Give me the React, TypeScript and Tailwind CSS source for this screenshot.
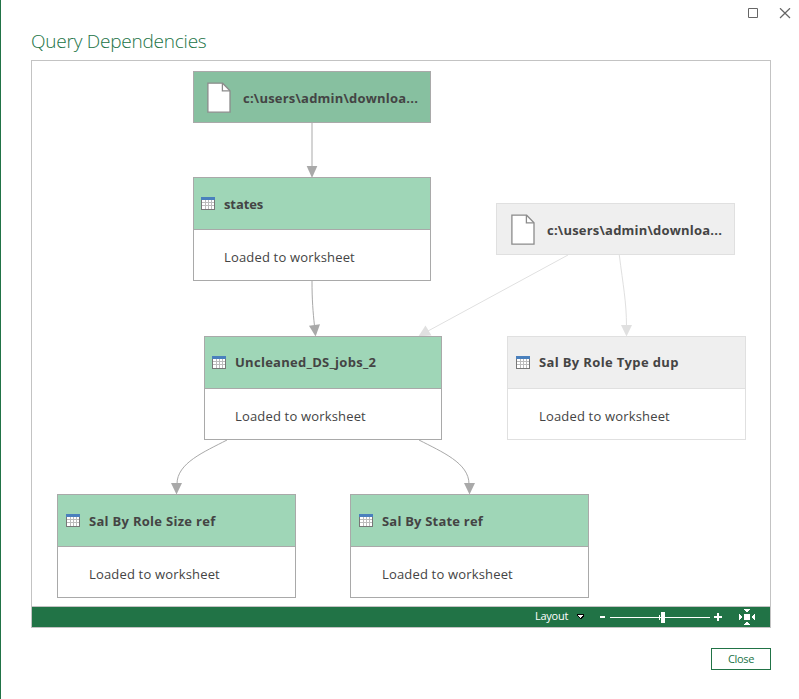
import React from "react";

type NodeData = {
  kind: "file" | "query";
  label: string;
  active: boolean;
  place: string;
  inset: string;
  text: string;
};

const nodes: NodeData[] = [
  { kind: "file", label: "c:\\users\\admin\\downloa...", active: true, place: "left-[161px] top-[10px] w-[238px]", inset: "pl-[13px]", text: "tracking-[0.21px]" },
  { kind: "query", label: "states", active: true, place: "left-[161px] top-[116px] w-[238px]", inset: "pl-[7px]", text: "tracking-[-0.1px]" },
  { kind: "file", label: "c:\\users\\admin\\downloa...", active: false, place: "left-[464px] top-[142px] w-[239px]", inset: "pl-[14px]", text: "tracking-[0.21px]" },
  { kind: "query", label: "Uncleaned_DS_jobs_2", active: true, place: "left-[172px] top-[275px] w-[238px]", inset: "pl-[7px]", text: "tracking-[0.28px] pb-[2px]" },
  { kind: "query", label: "Sal By Role Type dup", active: false, place: "left-[475px] top-[275px] w-[239px]", inset: "pl-[8px]", text: "tracking-[0.35px] pb-[2px]" },
  { kind: "query", label: "Sal By Role Size ref", active: true, place: "left-[25px] top-[433px] w-[239px]", inset: "pl-[8px]", text: "tracking-[0.29px]" },
  { kind: "query", label: "Sal By State ref", active: true, place: "left-[318px] top-[433px] w-[239px]", inset: "pl-[8px]", text: "tracking-[0.2px]" },
];

function FileIcon() {
  return (
    <svg className="h-8 w-6 shrink-0" viewBox="0 0 24 32">
      <path d="M.9 1.2H15.6L23 8.8V30.2H.9Z" fill="#fff" stroke="#8b8b8b" strokeWidth="1.3" />
      <path d="M15.4 1.2V8.8H23" fill="none" stroke="#8b8b8b" strokeWidth="1.3" />
    </svg>
  );
}

function TableIcon() {
  return (
    <svg className="h-[13px] w-[14px] shrink-0" viewBox="0 0 14 13" shapeRendering="crispEdges">
      <rect width="14" height="13" fill="#777" />
      <rect width="14" height="3" fill="#4a80bd" />
      <rect x="1" y="3" width="12" height="9" fill="#fff" />
      <path d="M4.5 3V12M7.5 3V12M10.5 3V12M1 5.5H13M1 8.5H13" stroke="#bcbcbc" />
    </svg>
  );
}

function GraphNode({ node }: { node: NodeData }) {
  const border = node.active ? "border-[#a9a9a9]" : "border-[#e0e0e0]";
  if (node.kind === "file") {
    return (
      <div className={`absolute flex h-[52px] items-center border pt-[2px] ${border} ${node.active ? "bg-[#87c0a0]" : "bg-[#efefef]"} ${node.inset} ${node.place}`}>
        <FileIcon />
        <span className={`ml-3 whitespace-nowrap text-[13px] font-bold leading-5 ${node.text}`}>{node.label}</span>
      </div>
    );
  }
  return (
    <div className={`absolute flex h-[104px] flex-col border bg-white ${border} ${node.place}`}>
      <div className={`flex h-[52px] items-center border-b ${border} ${node.active ? "bg-[#9fd6b7]" : "bg-[#efefef]"} ${node.inset}`}>
        <TableIcon />
        <span className={`ml-[9px] whitespace-nowrap text-[13px] font-bold leading-5 ${node.text}`}>{node.label}</span>
      </div>
      <div className={`flex flex-1 items-center pt-[3px] text-[13px] leading-5 tracking-[0.17px] ${node.inset}`}>
        <span className="ml-[23px]">Loaded to worksheet</span>
      </div>
    </div>
  );
}

function Edges() {
  return (
    <svg className="absolute inset-0 h-[545px] w-[738px]" viewBox="32 61 738 545" fill="none">
      <g stroke="#a9a9a9">
        <path d="M312 123V168" />
        <path d="M312 281C312 300 313 312 314.5 326" />
        <path d="M227 440C204 452 177 463 177 484" />
        <path d="M419 440C442 452 469 463 469 484" />
      </g>
      <g fill="#a9a9a9">
        <path d="M306.7 166H317.3L312 178Z" />
        <path d="M309 325.7L320 324.3L315.6 336.5Z" />
        <path d="M171 483H182L176.5 494.5Z" />
        <path d="M464 483H475L469.5 494.5Z" />
      </g>
      <g stroke="#e0e0e0">
        <path d="M568 255L428 331" />
        <path d="M619.3 255C623 285 626.5 302 626.5 326" />
      </g>
      <g fill="#e0e0e0">
        <path d="M425.5 325.5L431.5 335.5L418.5 336.2Z" />
        <path d="M621 325H632L626.5 336.5Z" />
      </g>
    </svg>
  );
}

function Toolbar() {
  return (
    <div className="flex h-[21px] items-center border-t border-[#c3c3c3] bg-[#217346] pl-[503px] text-white">
      <span className="w-[33px] whitespace-nowrap pb-[2px] text-[11px] leading-4 tracking-[-0.25px]">Layout</span>
      <svg className="h-5 w-[202px]" viewBox="568 607 202 20" shapeRendering="crispEdges">
        <path d="M577 614H584V616L580.5 619.5L577 616Z" fill="#000" />
        <path d="M578 615H583V616H582V617H581V618H580V617H579V616H578Z" fill="#fff" />
        <g fill="#fff">
          <path d="M600 616H605V618H600Z" />
          <path d="M610 617H710V618H610Z" />
          <path d="M659 615H660V620H659Z" />
          <path d="M661 612H665V623H661Z" />
          <path d="M714 616H722V618H714Z M717 613H719V621H717Z" />
          <path d="M744 614H750V620H744Z" />
          <path d="M744 609H750V610H749V611H748V612H746V611H745V610H744Z" />
          <path d="M744 625H750V624H749V623H748V622H746V623H745V624H744Z" />
          <path d="M739 614H740V615H741V616H742V618H741V619H740V620H739Z" />
          <path d="M755 614H754V615H753V616H752V618H753V619H754V620H755Z" />
        </g>
      </svg>
    </div>
  );
}

export default function App() {
  return (
    <div className="flex h-[699px] w-[799px] flex-col overflow-hidden border-l border-[#217346] bg-white font-['Open_Sans','Noto_Sans',sans-serif] text-[#444]">
      <div className="flex h-[25px] shrink-0 justify-end pr-2 pt-2">
        <svg className="h-3 w-11" viewBox="747 8 44 12" fill="none" stroke="#666">
          <path d="M748.5 8.5H757.5V17.5H748.5Z" />
          <path d="M780 8.2L790 18M790 8.2L780 18" strokeWidth="1.2" />
        </svg>
      </div>
      <h1 className="ml-[30px] h-[35px] shrink-0 whitespace-nowrap text-[19px] font-light leading-8 tracking-[-0.23px] text-[#217346]">Query Dependencies</h1>
      <main className="ml-[30px] flex h-[568px] w-[740px] shrink-0 flex-col border border-[#c3c3c3]">
        <div className="relative h-[545px]">
          <Edges />
          {nodes.map((node, i) => (
            <GraphNode key={i} node={node} />
          ))}
        </div>
        <Toolbar />
      </main>
      <div className="mr-7 mt-5 flex justify-end">
        <button className="flex h-[22px] w-[60px] items-center justify-center border border-[#217346] text-[11px] tracking-[-0.3px] text-[#217346]">Close</button>
      </div>
    </div>
  );
}
